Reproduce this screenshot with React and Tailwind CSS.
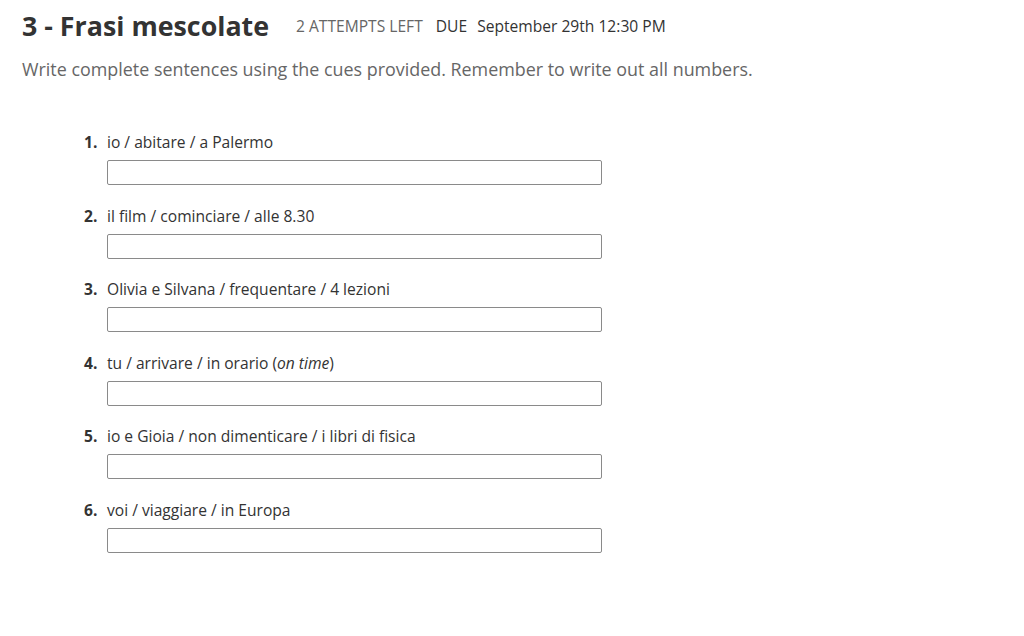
import React from "react";

const items = [
  { n: 1, t: <>io / abitare / a Palermo</> },
  { n: 2, t: <>il film / cominciare / alle 8.30</> },
  { n: 3, t: <>Olivia e Silvana / frequentare / 4 lezioni</> },
  { n: 4, t: <>tu / arrivare / in orario (<i>on time</i>)</> },
  { n: 5, t: <>io e Gioia / non dimenticare / i libri di fisica</> },
  { n: 6, t: <>voi / viaggiare / in Europa</> },
];

export default function App() {
  return (
    <div className="min-h-[636px] w-[1024px] bg-white text-[#333] font-['Open_Sans',sans-serif]">
      <div className="px-[22px] pt-[8px]">
        <div className="flex items-center">
          <h1 className="text-[26.8px] font-bold leading-[36px] text-[#333]">3 - Frasi mescolate</h1>
          <span className="ml-[27px] text-[15.6px] leading-[20px] text-[#666]">2 ATTEMPTS LEFT</span>
          <span className="ml-[13px] text-[15.6px] leading-[20px] text-[#333]">DUE</span>
          <span className="ml-[10px] text-[15.6px] leading-[20px] text-[#333]">September 29th 12:30 PM</span>
        </div>
        <p className="mt-[13px] text-[17.9px] leading-[24px] text-[#666]">
          Write complete sentences using the cues provided. Remember to write out all numbers.
        </p>
      </div>
      <ol className="mt-[51px] pl-[84px]">
        {items.map((it) => (
          <li key={it.n} className="mb-[20.6px]">
            <div className="flex text-[15.6px] leading-[20px] text-[#333]">
              <span className="w-[23px] font-bold">{it.n}.</span>
              <span>{it.t}</span>
            </div>
            <div className="ml-[23px] mt-[8px] h-[25px] w-[495px] rounded-[2px] border border-[#8a8a8a] bg-white" />
          </li>
        ))}
      </ol>
    </div>
  );
}
